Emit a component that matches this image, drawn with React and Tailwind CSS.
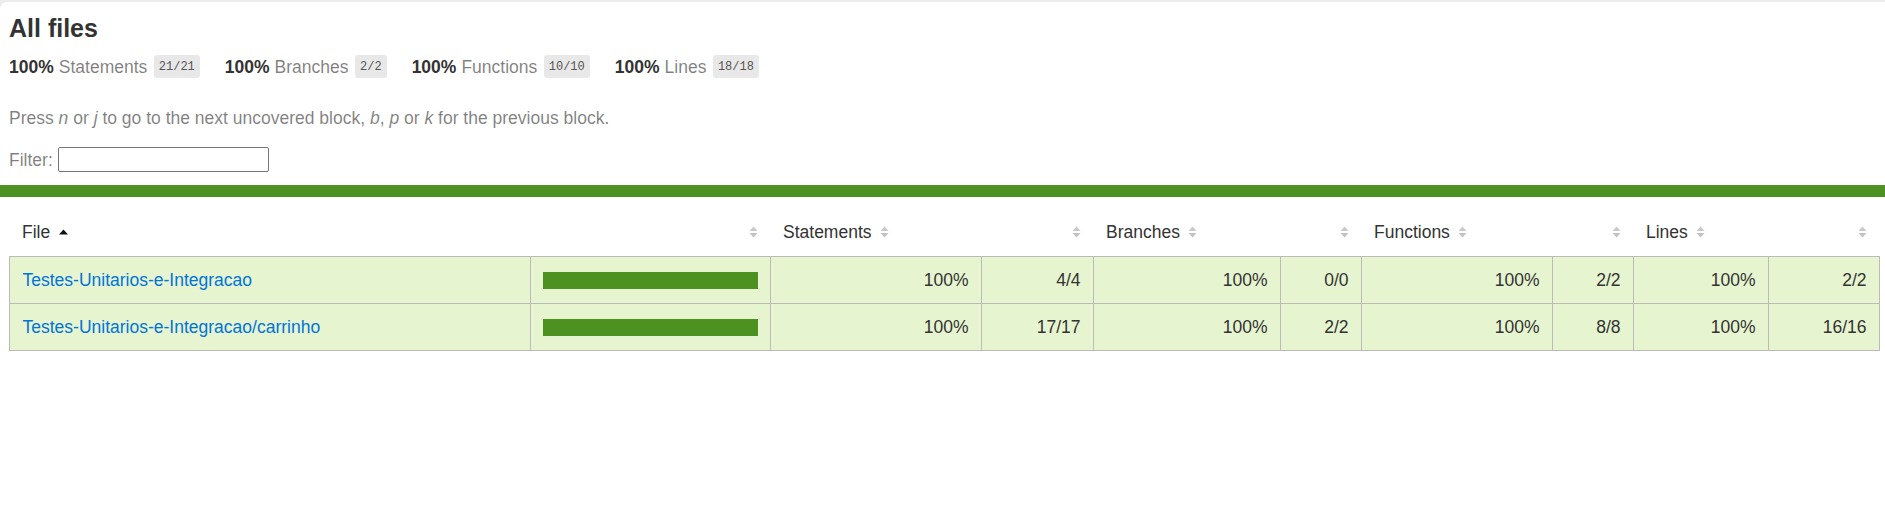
import React from 'react';

const totals = [
  { label: 'Statements', pct: '100%', frac: '21/21' },
  { label: 'Branches', pct: '100%', frac: '2/2' },
  { label: 'Functions', pct: '100%', frac: '10/10' },
  { label: 'Lines', pct: '100%', frac: '18/18' },
];

const rows = [
  {
    file: 'Testes-Unitarios-e-Integracao',
    stmts: '4/4',
    branches: '0/0',
    funcs: '2/2',
    lines: '2/2',
  },
  {
    file: 'Testes-Unitarios-e-Integracao/carrinho',
    stmts: '17/17',
    branches: '2/2',
    funcs: '8/8',
    lines: '16/16',
  },
];

// unsorted column: pale up/down arrows
const Sorter = () => (
  <svg width="9" height="12" viewBox="0 0 9 12" className="shrink-0">
    <path d="M0.5 5 L4.5 0.5 L8.5 5 Z" fill="#cacaca" />
    <path d="M0.5 7 L8.5 7 L4.5 11.5 Z" fill="#c2c2c2" />
  </svg>
);

// sorted ascending: solid black up arrow
const SortedUp = () => (
  <svg width="9" height="6" viewBox="0 0 9 6" className="shrink-0">
    <path d="M0 5.5 L4.5 0.5 L9 5.5 Z" fill="#111" />
  </svg>
);

const Badge = ({ children }) => (
  <span className="ml-[6.5px] inline-flex h-[23px] items-center rounded-[3px] bg-[#e8e8e8] px-[5px] text-[12px] text-[#555] font-['Liberation_Mono',monospace]">
    {children}
  </span>
);

const Th = ({ label, sorted, right }) => (
  <th className="h-[46px] px-[12.5px] pt-[12px] pb-[14px] align-top font-normal whitespace-nowrap">
    <div className={`flex h-[20px] items-center ${right ? 'justify-end' : ''}`}>
      {label && <span>{label}</span>}
      {sorted ? (
        <span className="ml-[8.5px] flex"><SortedUp /></span>
      ) : (
        <span className={label ? 'ml-[8.5px] flex' : 'flex'}><Sorter /></span>
      )}
    </div>
  </th>
);

const Pair = ({ frac, pctBorder }) => (
  <>
    <td className="border-r border-[#bbb] px-[12.5px] text-right">100%</td>
    <td className={`px-[12.5px] text-right ${pctBorder ? 'border-r border-[#bbb]' : ''}`}>{frac}</td>
  </>
);

export default function App() {
  return (
    <div className="min-h-[509px] bg-[#ececec] pt-[2px] text-[17.5px] leading-[20px] text-[#333] font-['Liberation_Sans',Arial,sans-serif]">
      <div className="min-h-[507px] rounded-tl-[7px] bg-white">
        <div className="px-[9px] pt-[12px] pb-[13px]">
          <h1 className="text-[25px] font-bold leading-[28px]">All files</h1>

          <div className="mt-[13px] flex h-[23px] items-center">
            {totals.map(t => (
              <div key={t.label} className="mr-[25px] flex items-center">
                <span className="font-bold">{t.pct}</span>
                <span className="ml-[5px] text-black/50">{t.label}</span>
                <Badge>{t.frac}</Badge>
              </div>
            ))}
          </div>

          <p className="mt-[29.5px] text-black/50">
            Press <em>n</em> or <em>j</em> to go to the next uncovered block, <em>b</em>, <em>p</em> or <em>k</em> for the previous block.
          </p>

          <div className="mt-[19.5px] flex h-[25px] items-center text-black/50">
            <span>Filter:</span>
            <input
              type="search"
              className="ml-[5px] h-[25px] w-[211px] rounded-[2px] border border-[#767676] bg-white outline-none"
            />
          </div>
        </div>

        <div className="h-[12px] bg-[#4d9221]" />

        <div className="pl-[9px] pt-[13px]">
          <table className="w-[1870px] table-fixed border-collapse">
            <colgroup>
              <col className="w-[521px]" />
              <col className="w-[240px]" />
              <col className="w-[211px]" />
              <col className="w-[112px]" />
              <col className="w-[187px]" />
              <col className="w-[81px]" />
              <col className="w-[191px]" />
              <col className="w-[81px]" />
              <col className="w-[135px]" />
              <col className="w-[111px]" />
            </colgroup>
            <thead>
              <tr className="text-left">
                <Th label="File" sorted />
                <Th right />
                <Th label="Statements" />
                <Th right />
                <Th label="Branches" />
                <Th right />
                <Th label="Functions" />
                <Th right />
                <Th label="Lines" />
                <Th right />
              </tr>
            </thead>
            <tbody className="border border-[#bbb]">
              {rows.map(r => (
                <tr key={r.file} className="h-[47px] border-b border-[#bbb] bg-[#e6f5d0]">
                  <td className="border-r border-[#bbb] px-[12.5px] whitespace-nowrap">
                    <a href="#" className="text-[#0074d9] hover:underline">{r.file}</a>
                  </td>
                  <td className="border-r border-[#bbb] pl-[11.5px] pr-[12px]">
                    <div className="h-[17px] w-full bg-[#4d9221]" />
                  </td>
                  <Pair frac={r.stmts} pctBorder />
                  <Pair frac={r.branches} pctBorder />
                  <Pair frac={r.funcs} pctBorder />
                  <Pair frac={r.lines} />
                </tr>
              ))}
            </tbody>
          </table>
        </div>
      </div>
    </div>
  );
}
